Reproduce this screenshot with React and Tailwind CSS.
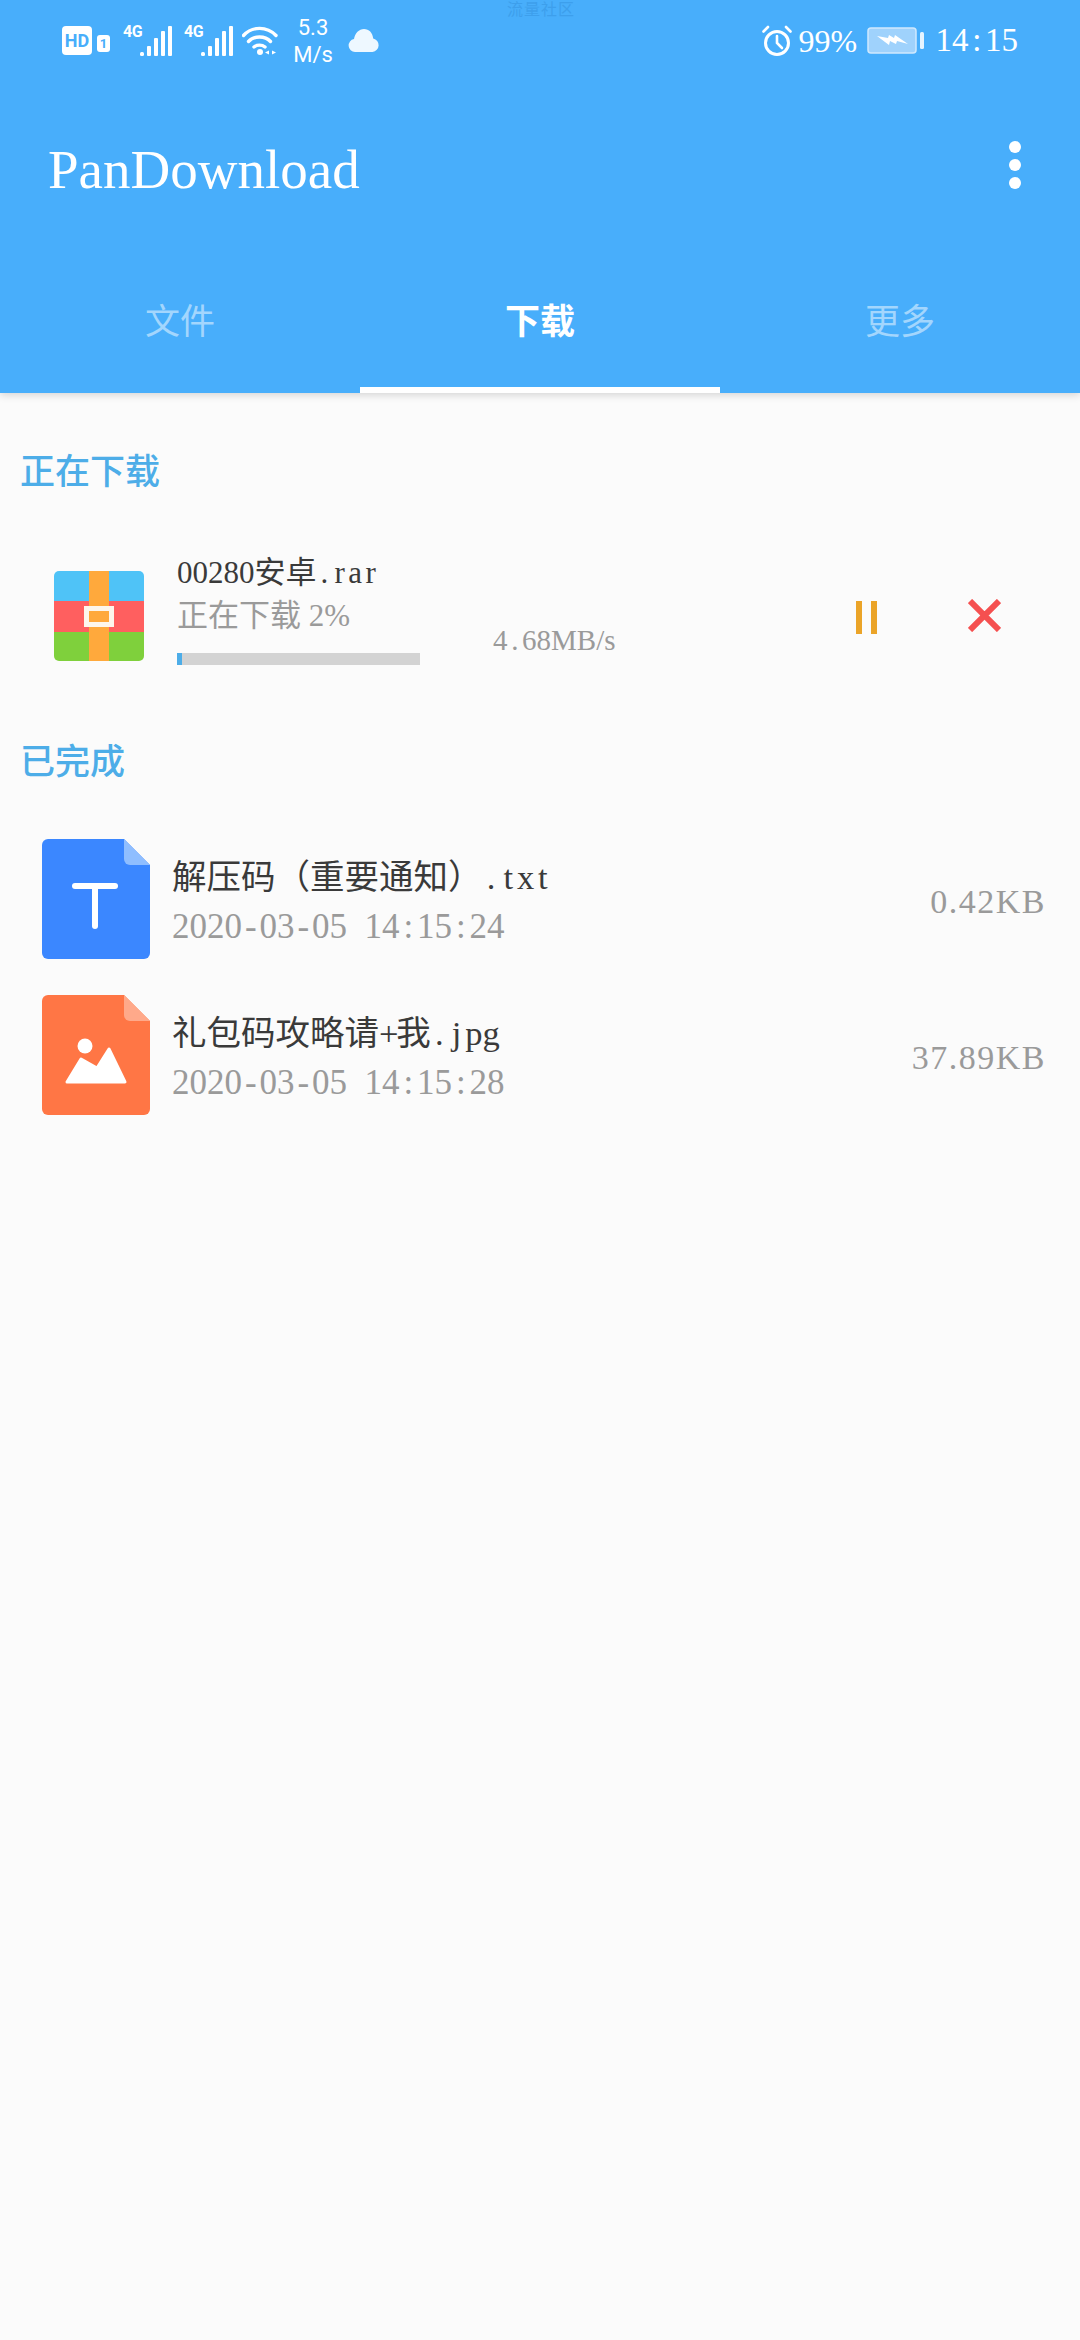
const serif = "font-['Liberation_Serif','Noto_Sans_CJK_SC',serif]";

// half-width cells, the phone font sets digits and latin on a fixed pitch
function Half({ children }) {
    return [...children].map((ch, i) => (
        <span key={i} className="inline-block w-[0.5em] text-center">
            {ch}
        </span>
    ));
}

function Signal() {
    return (
        <div className="relative h-[30px] w-[49px]">
            <span className="absolute left-0 top-[-2px] font-['Roboto',sans-serif] text-[16px] font-bold leading-[16px] tracking-[-0.5px] text-white">
                4G
            </span>
            <svg width="49" height="30" viewBox="0 0 49 30" fill="#fff">
                <rect x="17" y="26" width="4" height="4" rx="1.5" />
                <rect x="24" y="20" width="4" height="10" rx="1" />
                <rect x="31" y="12" width="4" height="18" rx="1" />
                <rect x="38" y="5" width="4" height="25" rx="1" />
                <rect x="45" y="0" width="4" height="30" rx="1" />
            </svg>
        </div>
    );
}

function Wifi() {
    return (
        <svg width="36" height="29" viewBox="0 0 36 29" fill="none" stroke="#fff" strokeWidth="3.4" strokeLinecap="round">
            <path d="M1.5 9.5C10 0 25 0 34 9.5" />
            <path d="M6.5 15.5C12 9.5 23 9.5 28.5 15.5" />
            <path d="M12 21C15 18.5 20 18.5 23 21" />
            <circle cx="18" cy="26" r="3" fill="#fff" stroke="none" />
            <path d="M27 24.5v4l-4-2zM30 24.5v4l4-2z" fill="#fff" stroke="none" />
        </svg>
    );
}

function Cloud() {
    return (
        <svg width="31" height="23" viewBox="0 0 31 23" fill="#fff">
            <path d="M7 23a6.5 6.5 0 0 1-1-12.9C7 4.200 11 0 16 0s8.600 3.800 9.200 9.400A6.900 6.900 0 0 1 24.500 23z" fill="#eef8ff" />
        </svg>
    );
}

function Alarm() {
    return (
        <svg width="30" height="31" viewBox="0 0 30 31" fill="none" stroke="#fff" strokeLinecap="round">
            <circle cx="15" cy="18" r="11.500" strokeWidth="3" />
            <path d="M15 11v7l5 5" strokeWidth="2.600" />
            <path d="M1.500 6.500L6 2M28.500 6.500L24 2" strokeWidth="2.600" />
        </svg>
    );
}

function Battery() {
    return (
        <svg width="57" height="27" viewBox="0 0 57 27">
            <rect x="1" y="1" width="48" height="25" rx="3" fill="#9fd2fc" stroke="#cfe9fe" strokeWidth="1.500" />
            <rect x="53" y="5" width="4" height="17" rx="1.500" fill="#e6f4ff" />
            <path d="M10 9l11 2 1-3 5 3 1-3 13 9-11-3-1 3-6-3-1 4z" fill="#fff" />
        </svg>
    );
}

function RarIcon() {
    return (
        <div className="relative mt-[16px] flex h-[90px] w-[90px] flex-col overflow-hidden rounded-[5px]">
            <div className="h-[30px] bg-[#4fc3f7]" />
            <div className="h-[31px] bg-[#ff5f5f]" />
            <div className="h-[29px] bg-[#7fd03c]" />
            <div className="absolute inset-y-0 left-[35px] w-[20px] bg-[#ffa93c]" />
            <div className="absolute left-[30px] top-[35px] h-[21px] w-[30px] border-[5px] border-[#fdf6ec] bg-[#ffa93c]" />
        </div>
    );
}

function FileIcon({ color, fold, children }) {
    return (
        <svg width="108" height="120" viewBox="0 0 108 120" className="shrink-0">
            <path d="M6 0H82L108 26V114a6 6 0 0 1-6 6H6a6 6 0 0 1-6-6V6a6 6 0 0 1 6-6z" fill={color} />
            <path d="M82 0L108 26H88a6 6 0 0 1-6-6z" fill={fold} />
            {children}
        </svg>
    );
}

function SectionTitle({ children }) {
    return (
        <div className={`px-[20px] text-[35px] font-medium leading-[48px] text-[#4dade8] ${serif}`}>
            {children}
        </div>
    );
}

function DoneRow({ icon, name, time, size }) {
    return (
        <div className="flex h-[120px] items-center pl-[42px] pr-[34px]">
            {icon}
            <div className={`ml-[22px] pt-[6px] ${serif}`}>
                <div className="text-[34.500px] leading-[40px] text-[#3a3a3a]">{name}</div>
                <div className="mt-[10px] text-[35px] leading-[40px] text-[#9a9a9a]">
                    <Half>{time}</Half>
                </div>
            </div>
            <div className={`ml-auto pt-[4px] text-[34px] tracking-[1.500px] text-[#9a9a9a] ${serif}`}>
                {size}
            </div>
        </div>
    );
}

export default function App() {
    return (
        <div className="relative flex h-[2340px] w-[1080px] flex-col overflow-hidden bg-[#fbfbfb]">
            {/* Header */}
            <div className="h-[393px] bg-[#48aefb] shadow-[0_2px_8px_rgba(0,0,0,0.16)]">
                <span className="absolute left-[507px] top-0 font-['Noto_Sans_CJK_SC',sans-serif] text-[16px] leading-[16px] tracking-[1px] text-[#3d9fec]">
                    流量社区
                </span>

                {/* Status bar */}
                <div className="flex h-[80px] items-center px-[62px] pt-[1px] text-white">
                    <div className="flex h-[29px] w-[30px] items-center justify-center rounded-[4px] bg-white font-['Roboto',sans-serif] text-[18px] font-bold leading-none text-[#48aefb]">
                        HD
                    </div>
                    <div className="ml-[5px] mt-[6px] flex h-[17px] w-[13px] items-center justify-center rounded-[3px] bg-white font-['Roboto',sans-serif] text-[13px] font-bold leading-none text-[#48aefb]">
                        1
                    </div>
                    <div className="ml-[13px]">
                        <Signal />
                    </div>
                    <div className="ml-[12px]">
                        <Signal />
                    </div>
                    <div className="ml-[9px]">
                        <Wifi />
                    </div>
                    <div className="ml-[15px] w-[40px] text-center font-['Roboto',sans-serif] text-[22px] leading-[27px]">
                        <div>5.3</div>
                        <div>M/s</div>
                    </div>
                    <div className="ml-[15px]">
                        <Cloud />
                    </div>

                    <div className="ml-auto">
                        <Alarm />
                    </div>
                    <div className={`ml-[7px] w-[59px] text-[32px] leading-none ${serif}`}>
                        <Half>99</Half>%
                    </div>
                    <div className="ml-[9px]">
                        <Battery />
                    </div>
                    <div className={`ml-[12px] text-[33px] leading-none ${serif}`}>
                        <Half>14:15</Half>
                    </div>
                </div>

                {/* Toolbar */}
                <div className="flex h-[180px] items-center justify-between pb-[2px] pl-[48px] pr-[59px]">
                    <span className={`text-[55px] leading-none text-white ${serif}`}>PanDownload</span>
                    <div className="flex -translate-y-[4px] flex-col gap-[6px]">
                        <span className="h-[12px] w-[12px] rounded-full bg-white" />
                        <span className="h-[12px] w-[12px] rounded-full bg-white" />
                        <span className="h-[12px] w-[12px] rounded-full bg-white" />
                    </div>
                </div>

                {/* Tabs */}
                <div className={`grid h-[133px] grid-cols-3 text-[35px] ${serif}`}>
                    <div className="flex items-center justify-center border-b-[6px] border-transparent text-white/50">文件</div>
                    <div className="flex items-center justify-center border-b-[6px] border-white font-bold text-white">下载</div>
                    <div className="flex items-center justify-center border-b-[6px] border-transparent text-white/50">更多</div>
                </div>
            </div>

            {/* Downloading */}
            <div className="pt-[56px]">
                <SectionTitle>正在下载</SectionTitle>
                <div className="flex h-[221px] pl-[54px] pt-[58px]">
                    <RarIcon />
                    <div className={`ml-[33px] w-[243px] ${serif}`}>
                        <div className="whitespace-nowrap text-[31px] leading-[36px] text-[#3a3a3a]">
                            <Half>00280</Half>安卓<Half>.rar</Half>
                        </div>
                        <div className="mt-[7px] whitespace-nowrap text-[31px] leading-[36px] text-[#9a9a9a]">
                            正在下载 <Half>2</Half>%
                        </div>
                        <div className="mt-[19px] h-[12px] w-[243px] bg-[#d3d3d3]">
                            <div className="h-full w-[5px] bg-[#4dade8]" />
                        </div>
                    </div>
                    <div className={`ml-[73px] mt-[67px] text-[29px] leading-[36px] text-[#9a9a9a] ${serif}`}>
                        <Half>4.68</Half>MB/s
                    </div>
                    <div className="ml-auto mr-[79px] mt-[46px] flex items-start">
                        <div className="flex h-[33px] w-[21px] justify-between">
                            <span className="w-[6px] bg-[#eba428]" />
                            <span className="w-[6px] bg-[#eba428]" />
                        </div>
                        <svg className="ml-[91px] -mt-[2px]" width="33" height="33" viewBox="0 0 33 33" stroke="#f55050" strokeWidth="6">
                            <path d="M2 2L31 31M31 2L2 31" />
                        </svg>
                    </div>
                </div>
            </div>

            {/* Finished */}
            <div className="mt-[21px]">
                <SectionTitle>已完成</SectionTitle>
                <div className="mt-[52px] flex flex-col gap-[36px]">
                    <DoneRow
                        icon={
                            <FileIcon color="#3b87ff" fold="#8fbeff">
                                <rect x="30" y="44" width="46" height="6" rx="3" fill="#fff" />
                                <rect x="50" y="44" width="6" height="46" rx="3" fill="#fff" />
                            </FileIcon>
                        }
                        name={
                            <>
                                解压码（重要通知）<Half>.txt</Half>
                            </>
                        }
                        time="2020-03-05 14:15:24"
                        size="0.42KB"
                    />
                    <DoneRow
                        icon={
                            <FileIcon color="#ff7645" fold="#ffa98a">
                                <circle cx="43" cy="51" r="7.500" fill="#fff" />
                                <path d="M25 87L39 64L55 73L67 54L83 87z" fill="#fff" stroke="#fff" strokeWidth="3" strokeLinejoin="round" />
                            </FileIcon>
                        }
                        name={
                            <>
                                礼包码攻略请<Half>+</Half>我<Half>.jpg</Half>
                            </>
                        }
                        time="2020-03-05 14:15:28"
                        size="37.89KB"
                    />
                </div>
            </div>
        </div>
    );
}
